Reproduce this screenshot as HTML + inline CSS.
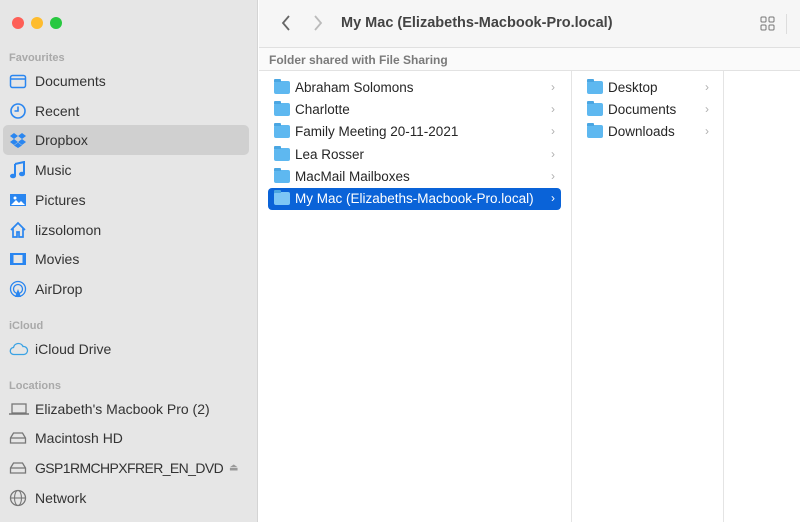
<!DOCTYPE html>
<html><head><style>
*{margin:0;padding:0;box-sizing:border-box}
body{width:800px;height:522px;overflow:hidden;font-family:"Liberation Sans",sans-serif;background:#fff;position:relative}
.side{position:absolute;left:0;top:0;width:258px;height:522px;background:#e6e6e6;border-right:1px solid #d4d4d4}
.dot{position:absolute;top:17px;width:12px;height:12px;border-radius:50%}
.sh{position:absolute;left:9px;font-size:11px;font-weight:bold;color:#a9a9a9}
.si{position:absolute;left:0;height:30px;width:258px;font-size:14px;color:#333}
.si span{position:absolute;left:35px;top:50%;transform:translateY(-50%);white-space:nowrap}
.si svg{position:absolute;left:9px;top:50%;transform:translateY(-50%)}
.sel{position:absolute;left:3px;top:125px;width:246px;height:30px;background:#d0d0d0;border-radius:5px}
.tb{position:absolute;left:259px;top:0;right:0;height:48px;background:#f6f6f6;border-bottom:1px solid #e0e0e0}
.hd{position:absolute;left:259px;top:48px;right:0;height:23px;background:#fafafa;border-bottom:1px solid #e2e2e2;font-size:12px;font-weight:bold;color:#7a7a7a;padding:5px 0 0 10px}
.row{position:absolute;height:22px;font-size:13.5px;color:#262626}
.row span{position:absolute;left:27px;top:3px}
.row .f{position:absolute;left:6px;top:4px;width:16px;height:13px;background:#5eb8f0;border-radius:2px}
.row .f:before{content:"";position:absolute;left:0;top:-2px;width:7px;height:3px;background:#4aa6e2;border-radius:1px 1px 0 0}
.row .ch{position:absolute;right:6px;top:3px;color:#b0b0b0;font-size:12px}
.vl{position:absolute;top:71px;bottom:0;width:1px;background:#e4e4e4}
</style></head><body>
<div class="side">
<div class="dot" style="left:12px;background:#fe5f57"></div>
<div class="dot" style="left:31px;background:#febc2e"></div>
<div class="dot" style="left:50px;background:#28c840"></div>
<div class="sh" style="top:52px">Favourites</div>
<div class="sel"></div>
<div class="si" style="top:66px"><svg width="18" height="16"><rect x="1.5" y="2.5" width="15" height="12" rx="2" fill="none" stroke="#2a86f0" stroke-width="1.5"/><line x1="1.5" y1="6" x2="16.5" y2="6" stroke="#2a86f0" stroke-width="1.5"/></svg><span>Documents</span></div>
<div class="si" style="top:96px"><svg width="18" height="18"><circle cx="9" cy="9" r="7" fill="none" stroke="#2a86f0" stroke-width="1.6"/><path d="M9 4.5V9H5.5" fill="none" stroke="#2a86f0" stroke-width="1.6"/></svg><span>Recent</span></div>
<div class="si" style="top:125px"><svg width="18" height="16"><path d="M5 1L1 4l4 3 4-3zM13 1l-4 3 4 3 4-3zM5 7L1 10l4 3 4-3zM13 7l-4 3 4 3 4-3zM5 13.5l4 2.5 4-2.5-4-3z" fill="#2a86f0"/></svg><span>Dropbox</span></div>
<div class="si" style="top:155px"><svg width="18" height="18"><path d="M6 3L15 1V13" fill="none" stroke="#2a86f0" stroke-width="2"/><path d="M6 3V15" stroke="#2a86f0" stroke-width="2"/><ellipse cx="4" cy="15" rx="3" ry="2.3" fill="#2a86f0"/><ellipse cx="13" cy="13" rx="3" ry="2.3" fill="#2a86f0"/></svg><span>Music</span></div>
<div class="si" style="top:185px"><svg width="18" height="16"><rect x="1" y="2" width="16" height="12" fill="#2a86f0"/><path d="M2 13l5-5 3 3 2-2 4 4z" fill="#fff"/><circle cx="6" cy="6" r="1.5" fill="#fff"/></svg><span>Pictures</span></div>
<div class="si" style="top:215px"><svg width="18" height="18"><path d="M2 9L9 2l7 7M4 7.5V16h4v-5h2v5h4V7.5" fill="none" stroke="#2a86f0" stroke-width="1.7"/></svg><span>lizsolomon</span></div>
<div class="si" style="top:244px"><svg width="18" height="16"><rect x="1" y="2" width="16" height="12" fill="#2a86f0"/><rect x="4.5" y="4" width="9" height="8" fill="#e6e6e6"/></svg><span>Movies</span></div>
<div class="si" style="top:274px"><svg width="18" height="18"><circle cx="9" cy="9" r="7.5" fill="none" stroke="#2a86f0" stroke-width="1.3"/><circle cx="9" cy="9" r="4.5" fill="none" stroke="#2a86f0" stroke-width="1.3"/><path d="M9 9l-3 8h6z" fill="#2a86f0"/></svg><span>AirDrop</span></div>
<div class="sh" style="top:320px">iCloud</div>
<div class="si" style="top:334px"><svg width="20" height="14"><path d="M5 12.5a3.5 3.5 0 0 1-.5-7 5 5 0 0 1 9.5-1 4 4 0 0 1 1 8z" fill="none" stroke="#3aa2e4" stroke-width="1.3"/></svg><span>iCloud Drive</span></div>
<div class="sh" style="top:380px">Locations</div>
<div class="si" style="top:394px"><svg width="20" height="14"><rect x="3" y="2" width="14" height="9" fill="none" stroke="#777" stroke-width="1.3"/><line x1="0" y1="12" x2="20" y2="12" stroke="#777" stroke-width="1.5"/></svg><span>Elizabeth's Macbook Pro (2)</span></div>
<div class="si" style="top:423px"><svg width="18" height="14"><path d="M1.5 7l3-5h9l3 5v5h-15z" fill="none" stroke="#777" stroke-width="1.3"/><line x1="1.5" y1="7" x2="16.5" y2="7" stroke="#777" stroke-width="1.3"/></svg><span>Macintosh HD</span></div>
<div class="si" style="top:453px"><svg width="18" height="14"><path d="M1.5 7l3-5h9l3 5v5h-15z" fill="none" stroke="#777" stroke-width="1.3"/><line x1="1.5" y1="7" x2="16.5" y2="7" stroke="#777" stroke-width="1.3"/></svg><span style="letter-spacing:-0.6px">GSP1RMCHPXFRER_EN_DVD</span><span style="left:229px;font-size:10px;color:#999">⏏</span></div>
<div class="si" style="top:483px"><svg width="18" height="18"><circle cx="9" cy="9" r="7.5" fill="none" stroke="#777" stroke-width="1.3"/><ellipse cx="9" cy="9" rx="3.5" ry="7.5" fill="none" stroke="#777" stroke-width="1.1"/><line x1="1.5" y1="9" x2="16.5" y2="9" stroke="#777" stroke-width="1.1"/></svg><span>Network</span></div>
</div>
<div class="tb">
<svg style="position:absolute;left:22px;top:15px" width="10" height="16"><path d="M8 1L2 8l6 7" fill="none" stroke="#666" stroke-width="1.8"/></svg>
<svg style="position:absolute;left:54px;top:15px" width="10" height="16"><path d="M2 1l6 7-6 7" fill="none" stroke="#bbb" stroke-width="1.8"/></svg>
<div style="position:absolute;left:82px;top:15px;font-size:14.5px;font-weight:bold;color:#444">My Mac (Elizabeths-Macbook-Pro.local)</div>
<svg style="position:absolute;left:501px;top:16px" width="15" height="15"><rect x="1" y="1" width="5" height="5" rx="1" fill="none" stroke="#777"/><rect x="9" y="1" width="5" height="5" rx="1" fill="none" stroke="#777"/><rect x="1" y="9" width="5" height="5" rx="1" fill="none" stroke="#777"/><rect x="9" y="9" width="5" height="5" rx="1" fill="none" stroke="#777"/></svg>
<div style="position:absolute;left:527px;top:14px;width:1px;height:20px;background:#ddd"></div>
</div>
<div class="hd">Folder shared with File Sharing</div>
<div class="vl" style="left:571px"></div>
<div class="vl" style="left:723px"></div>
<div class="row" style="left:268px;top:77px;width:293px"><div class="f"></div><span>Abraham Solomons</span><div class="ch">›</div></div>
<div class="row" style="left:268px;top:99px;width:293px"><div class="f"></div><span>Charlotte</span><div class="ch">›</div></div>
<div class="row" style="left:268px;top:121px;width:293px"><div class="f"></div><span>Family Meeting 20-11-2021</span><div class="ch">›</div></div>
<div class="row" style="left:268px;top:144px;width:293px"><div class="f"></div><span>Lea Rosser</span><div class="ch">›</div></div>
<div class="row" style="left:268px;top:166px;width:293px"><div class="f"></div><span>MacMail Mailboxes</span><div class="ch">›</div></div>
<div class="row" style="left:268px;top:188px;width:293px;background:#0a63d8;border-radius:4px;color:#fff"><div class="f" style="background:#7cc6f5"></div><span>My Mac (Elizabeths-Macbook-Pro.local)</span><div class="ch" style="color:#fff">›</div></div>
<div class="row" style="left:581px;top:77px;width:134px"><div class="f"></div><span>Desktop</span><div class="ch">›</div></div>
<div class="row" style="left:581px;top:99px;width:134px"><div class="f"></div><span>Documents</span><div class="ch">›</div></div>
<div class="row" style="left:581px;top:121px;width:134px"><div class="f"></div><span>Downloads</span><div class="ch">›</div></div>
</body></html>
